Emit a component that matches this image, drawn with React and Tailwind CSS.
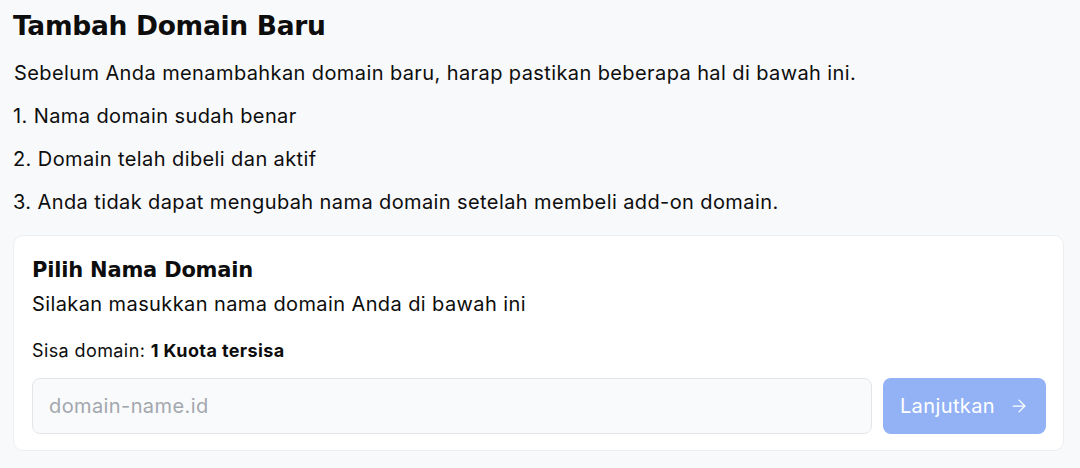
import React from 'react';
import { ArrowRight } from 'lucide-react';

const App = () => {
  const steps = [
    'Nama domain sudah benar',
    'Domain telah dibeli dan aktif',
    'Anda tidak dapat mengubah nama domain setelah membeli add-on domain.',
  ];

  return (
    <div className="min-h-screen w-full bg-[#f8f9fb] px-[13px] pt-[9px] text-[#0d0d0d] font-['Inter',sans-serif]">
      {/* Judul */}
      <h1 className="text-[26.5px] leading-[34px] font-bold font-['DejaVu_Sans',sans-serif] tracking-[-0.3px]">
        Tambah Domain Baru
      </h1>
      <p className="mt-[18px] text-[20px] leading-[24px] tracking-[0.4px] pl-[1px]">
        Sebelum Anda menambahkan domain baru, harap pastikan beberapa hal di bawah ini.
      </p>
      <ol className="mt-[19px] flex flex-col gap-[19px] text-[20px] leading-[24px] tracking-[0.4px]">
        {steps.map((s, i) => (
          <li key={i}>{i + 1}. {s}</li>
        ))}
      </ol>

      {/* Card pilih domain */}
      <div className="mt-[21px] mr-[3px] bg-white border border-[#eceef2] rounded-[10px] px-[18px] pt-[22px] pb-[16px]">
        <h2 className="text-[21px] leading-[24px] font-bold font-['DejaVu_Sans',sans-serif] tracking-[-0.2px]">
          Pilih Nama Domain
        </h2>
        <p className="mt-[10px] text-[20px] leading-[24px] tracking-[0.4px]">
          Silakan masukkan nama domain Anda di bawah ini
        </p>
        <p className="mt-[25px] text-[18px] leading-[20px] tracking-[0.4px]">
          Sisa domain: <span className="font-bold">1 Kuota tersisa</span>
        </p>
        <div className="mt-[17px] flex items-center gap-[11px]">
          <input
            type="text"
            placeholder="domain-name.id"
            className="flex-1 h-[56px] rounded-[8px] border border-[#e3e5e9] bg-[#f9fafb] px-[16px] text-[20px] tracking-[0.4px] placeholder:text-[#a3a7ae] focus:outline-none"
          />
          <button
            type="button"
            disabled
            className="h-[56px] w-[163px] flex items-center justify-center gap-[14px] rounded-[8px] bg-[#93b2f6] text-white text-[20px] tracking-[0.4px] mr-[-1px]"
          >
            Lanjutkan
            <ArrowRight size={20} strokeWidth={1.5} />
          </button>
        </div>
      </div>
    </div>
  );
};

export default App;
